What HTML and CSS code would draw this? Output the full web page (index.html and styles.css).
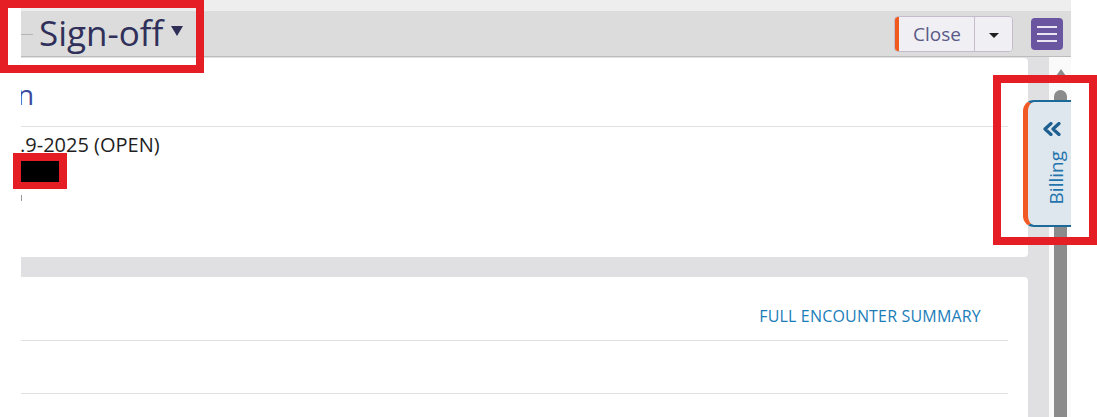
FILE: index.html
```html
<!DOCTYPE html>
<html lang="en">
<head>
<meta charset="utf-8">
<title>Sign-off</title>
<link rel="stylesheet" href="styles.css">
</head>
<body>
<div class="page">
  <div class="left-gap"></div>
  <div class="app">
    <div class="top-strip"></div>
    <header class="header">
      <div class="header-left">
        <span class="crumb-line"></span>
        <h1 class="title">Sign-off</h1>
        <span class="title-caret"></span>
      </div>
      <div class="header-right">
        <div class="btn-group">
          <button class="btn btn-close">Close</button>
          <button class="btn btn-drop"><span class="caret"></span></button>
        </div>
        <button class="menu-btn" aria-label="Menu">
          <span></span><span></span><span></span>
        </button>
      </div>
    </header>
    <div class="body">
      <main class="content">
        <section class="card card-one">
          <div class="card-title"><span class="title-text">n</span></div>
          <div class="card-info">
            <div class="info-line">.9-2025 (OPEN)</div>
            <div class="redacted"></div>
            <div class="clip-mark"></div>
          </div>
        </section>
        <section class="card card-two">
          <div class="row row-head"><a class="summary-link">FULL ENCOUNTER SUMMARY</a></div>
          <div class="row row-mid"></div>
          <div class="row row-last"></div>
        </section>
      </main>
      <aside class="scrollbar">
        <span class="scroll-up"></span>
        <span class="scroll-thumb"></span>
      </aside>
    </div>
    <div class="billing-tab">
      <svg class="chev" width="20" height="14" viewBox="0 0 20 14">
        <path d="M9 1.5 L3 7 L9 12.5 M17 1.5 L11 7 L17 12.5" fill="none" stroke="#1d5f90" stroke-width="3.2" stroke-linecap="round" stroke-linejoin="round"/>
      </svg>
      <span class="billing-label">Billing</span>
    </div>
  </div>
</div>
<div class="mark mark-title"></div>
<div class="mark mark-redact"></div>
<div class="mark mark-billing"></div>
</body>
</html>
```

FILE: styles.css
```css
* { box-sizing: border-box; }
html, body { margin: 0; padding: 0; }
body {
  background: #ffffff;
  font-family: "Open Sans", "Liberation Sans", sans-serif;
  width: 1097px;
  height: 417px;
  overflow: hidden;
  position: relative;
}
.page { display: flex; height: 417px; }
.left-gap { width: 21px; flex: none; background: #ffffff; }
.app {
  width: 1050px;
  flex: none;
  height: 417px;
  overflow: hidden;
  position: relative;
  display: flex;
  flex-direction: column;
}
.top-strip { height: 11px; background: #eeeeee; flex: none; }
.header {
  height: 46px;
  flex: none;
  background: #dcdcdc;
  border-bottom: 1px solid #bcbcbc;
  display: flex;
  align-items: center;
  justify-content: space-between;
  padding-right: 8px;
}
.header-left { display: flex; align-items: center; }
.crumb-line { width: 12px; height: 1px; background: #b4b4b4; margin-right: 6px; margin-top: 2px; }
.title {
  margin: 0;
  font-size: 35px;
  font-weight: 400;
  color: #30305a;
  line-height: 46px;
  margin-top: -1px;
}
.title-caret {
  width: 0; height: 0;
  border-left: 6px solid transparent;
  border-right: 6px solid transparent;
  border-top: 10px solid #2e2e56;
  margin-left: 8px;
  margin-top: -6px;
}
.header-right { display: flex; align-items: center; gap: 18px; }
.btn-group {
  display: flex;
  height: 36px;
  border: 1px solid #c4bccd;
  border-radius: 4px;
  overflow: hidden;
  background: #f0eff4;
  margin-top: 1px;
}
.btn {
  border: none;
  background: #f0eff4;
  font-family: "Open Sans", "Liberation Sans", sans-serif;
  padding: 0;
  margin: 0;
}
.btn-close {
  border-left: 4px solid #f05a1f;
  padding: 0 13px 0 14px;
  font-size: 19px;
  color: #5a5a86;
  line-height: 34px;
  border-right: 1px solid #c4bccd;
}
.btn-drop {
  width: 37px;
  display: flex;
  align-items: center;
  justify-content: center;
}
.caret {
  width: 0; height: 0;
  border-left: 5px solid transparent;
  border-right: 5px solid transparent;
  border-top: 5px solid #1e1e1e;
  margin-top: 2px;
}
.menu-btn {
  width: 32px;
  height: 32px;
  border: none;
  border-radius: 4px;
  background: #6a55a0;
  display: flex;
  flex-direction: column;
  align-items: center;
  justify-content: center;
  gap: 5px;
  padding: 0;
  margin-top: 1px;
}
.menu-btn span { width: 20px; height: 2px; background: #ebe6f3; display: block; }

.body { flex: 1; display: flex; min-height: 0; }
.content {
  flex: 1;
  background: #e0e0e2;
  padding: 1px 21px 0 0;
  display: flex;
  flex-direction: column;
  gap: 20px;
}
.card {
  background: #ffffff;
  border-radius: 0 4px 4px 0;
  overflow: hidden;
}
.card-one { height: 199px; padding-right: 20px; }
.card-title {
  height: 69px;
  border-bottom: 1px solid #e2e2e2;
  padding-top: 22px;
}
.title-text {
  display: block;
  margin-left: -4px;
  font-size: 28px;
  line-height: 28px;
  color: #3b4a9f;
}
.card-info { padding-top: 8px; }
.info-line {
  font-size: 20px;
  line-height: 20px;
  color: #1f1f1f;
  margin-left: -1px;
}
.redacted { width: 38px; height: 21px; background: #000000; margin-top: 6px; }
.clip-mark { width: 1px; height: 6px; background: #9a9a9a; margin-top: 13px; }

.card-two { flex: 1; padding-right: 20px; border-radius: 0 4px 0 0; }
.row { border-bottom: 1px solid #e0e0e0; }
.row-head {
  height: 64px;
  display: flex;
  justify-content: flex-end;
  padding: 31px 27px 0 0;
}
.summary-link {
  font-size: 16px;
  line-height: 16px;
  letter-spacing: 0.18px;
  color: #1b7db8;
  white-space: nowrap;
}
.row-mid { height: 53px; }
.row-last { border-bottom: none; }

.scrollbar {
  width: 22px;
  flex: none;
  background: #fafafa;
  display: flex;
  flex-direction: column;
  align-items: center;
  padding-top: 12px;
}
.scroll-up {
  width: 0; height: 0;
  border-left: 5px solid transparent;
  border-right: 5px solid transparent;
  border-bottom: 7px solid #8b8b8b;
  margin-left: 1px;
}
.scroll-thumb {
  width: 13px;
  flex: 1;
  background: #8b8b8b;
  border-radius: 7px 7px 0 0;
  margin-top: 14px;
  margin-left: 1px;
}

.billing-tab {
  position: absolute;
  left: 1002px;
  top: 100px;
  width: 60px;
  height: 127px;
  background: #dfe7ee;
  border-left: 5px solid #f15a24;
  border-top: 2px solid #1b6a9a;
  border-bottom: 2px solid #1b6a9a;
  border-radius: 11px 0 0 11px;
  display: flex;
  flex-direction: column;
  align-items: flex-start;
  padding: 20px 0 0 14px;
}
.chev { display: block; }
.billing-label {
  writing-mode: vertical-rl;
  transform: rotate(180deg);
  font-size: 19px;
  line-height: 20px;
  color: #2374ad;
  margin-top: 15px;
  margin-left: 4px;
}

.mark {
  position: absolute;
  border: 8px solid #e51e25;
  pointer-events: none;
}
.mark-title { left: 0; top: 0; width: 204px; height: 73px; }
.mark-redact { left: 13px; top: 153px; width: 54px; height: 36px; border-width: 8px 8px 7px 8px; }
.mark-billing { left: 993px; top: 75px; width: 104px; height: 170px; }
```
